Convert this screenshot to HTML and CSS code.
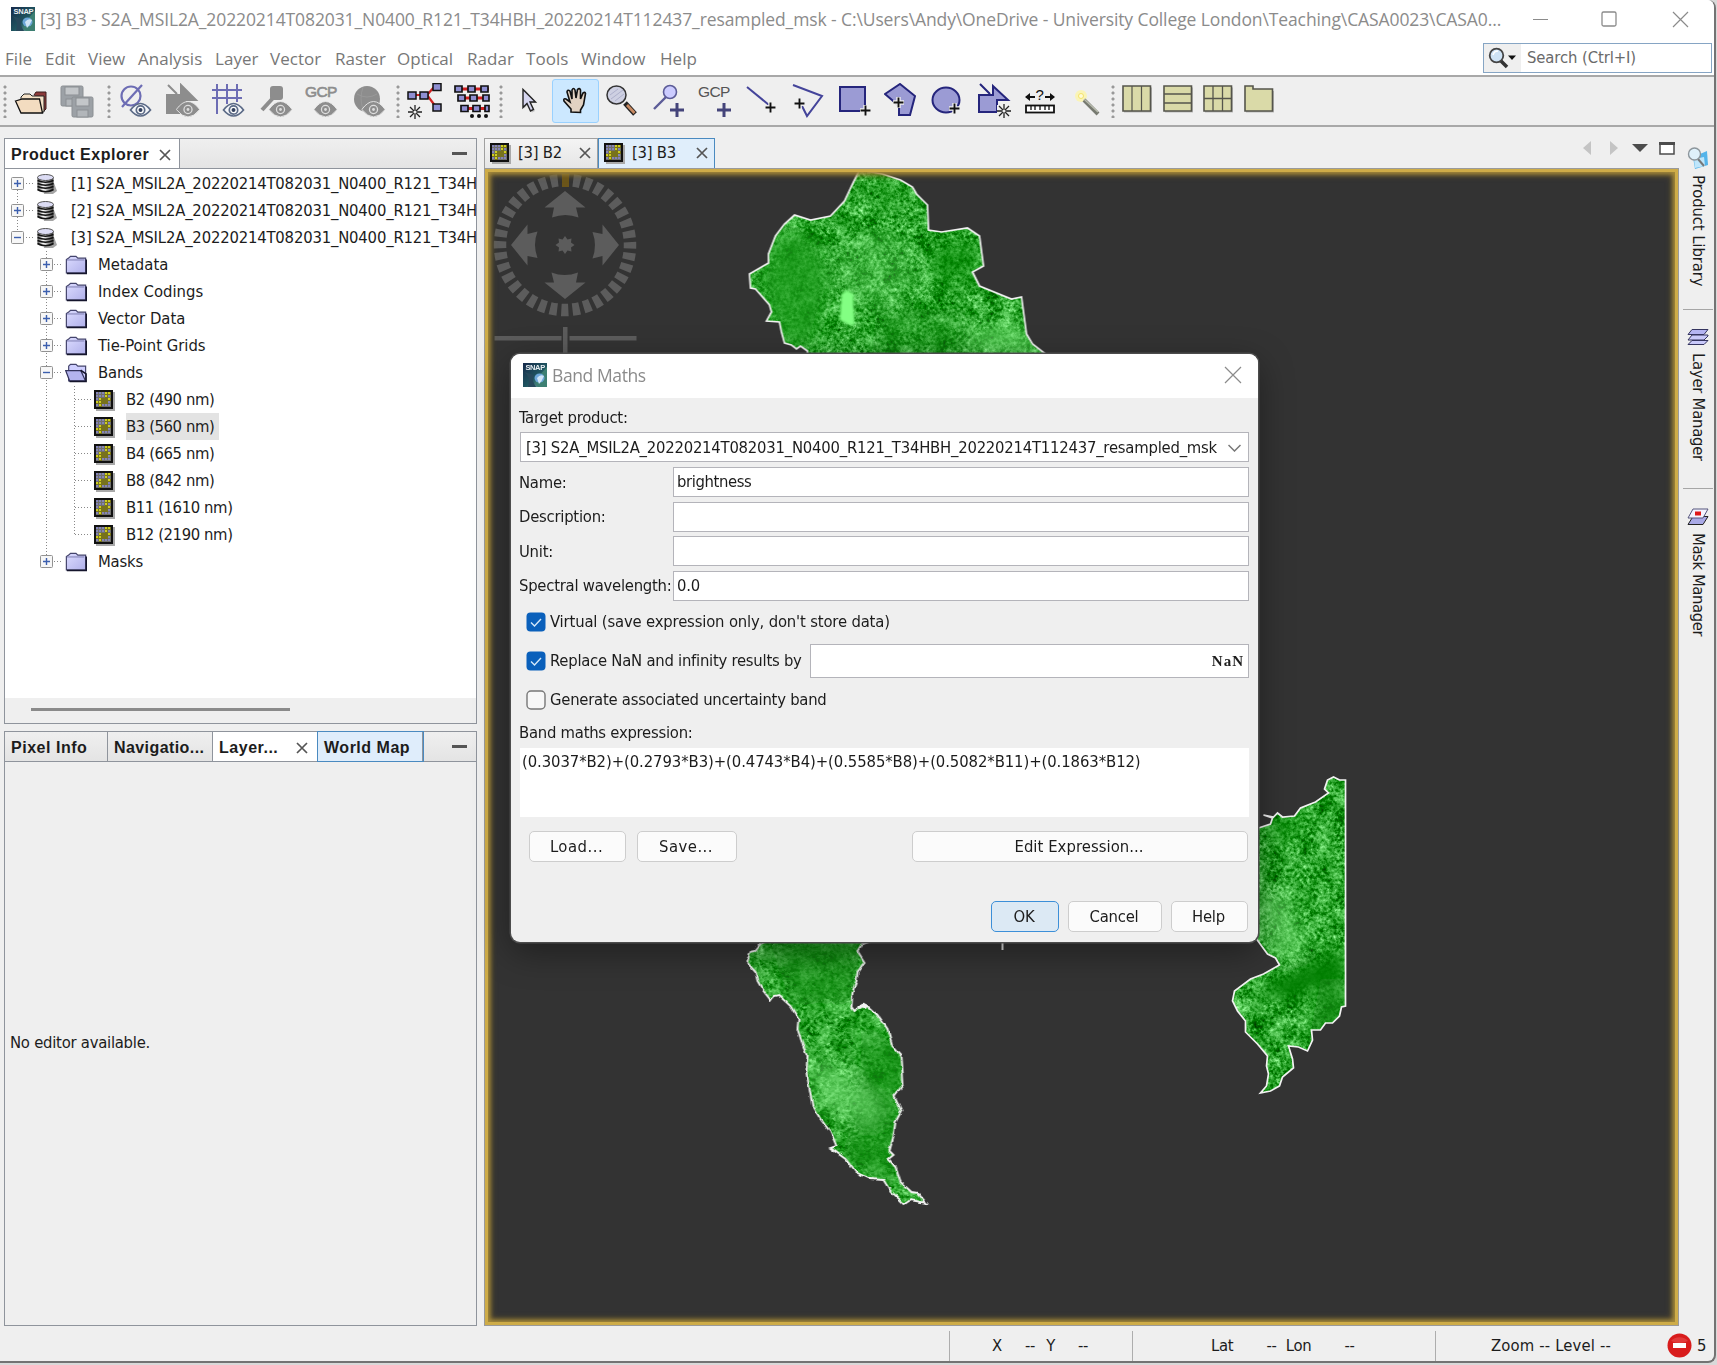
FILE: index.html
```html
<!DOCTYPE html>
<html lang="en">
<head>
<meta charset="utf-8">
<title>SNAP - Band Maths</title>
<link rel="stylesheet" href="styles.css">
</head>
<body>
<svg class="defs" width="0" height="0">
  <defs>
    <linearGradient id="g-snap" x1="0" y1="0" x2="1" y2="1"><stop offset="0" stop-color="#16294a"/><stop offset=".55" stop-color="#1f5560"/><stop offset="1" stop-color="#7fb1a8"/></linearGradient>
    <linearGradient id="g-folder" x1="0" y1="0" x2="1" y2="1"><stop offset="0" stop-color="#dcdcff"/><stop offset="1" stop-color="#b0b0ea"/></linearGradient>
    <linearGradient id="g-db" x1="0" x2="1"><stop offset="0" stop-color="#555"/><stop offset=".35" stop-color="#fff"/><stop offset="1" stop-color="#444"/></linearGradient>
    <pattern id="p-band" width="3" height="3" patternUnits="userSpaceOnUse"><rect width="3" height="3" fill="#70706c"/><rect width="2" height="2" fill="#8484b8"/></pattern>
    <pattern id="p-bandy" width="3" height="3" patternUnits="userSpaceOnUse"><rect width="3" height="3" fill="#77721c"/><rect width="2" height="2" fill="#cfcf20"/></pattern>
    <symbol id="snap" viewBox="0 0 24 24"><rect width="24" height="24" fill="url(#g-snap)"/><path d="M24 4v20h-9c-4-3-3-8 1-11z" fill="#3d7f72"/><ellipse cx="16.500" cy="15" rx="5" ry="4.500" fill="#6ca6d8"/><path d="M14 15q3-4 7-2q-2 5-5 8z" fill="#cfe4f6"/><path d="M1 9q7 4 4 15h8q-5-7-2-12z" fill="#27495c"/><text x="2.500" y="6.500" font-family="Liberation Sans" font-weight="700" font-size="7.500" fill="#e8eef2">SNAP</text></symbol>
    <symbol id="band" viewBox="0 0 22 22"><path d="M3 3h19v19H3z" fill="#a9a9a9"/><rect x="1" y="1" width="19" height="19" fill="#111"/><rect x="3" y="3" width="15" height="15" fill="url(#p-band)"/><path d="M12 3h6v3h-3v3h-3zM6 9h3v3H6zM3 12h6v3H3zM15 9h3v3h-3zM6 15h3v3H6z" fill="url(#p-bandy)"/><path d="M9 9h6v6H9z" fill="#77721c"/></symbol>
    <symbol id="folder" viewBox="0 0 24 22"><path d="M4 3.500l2-2h6l2 2h8.500v16H1.500V5z" fill="url(#g-folder)" stroke="#44446c" stroke-width="1.300"/><path d="M2 20.300h21.300V5" fill="none" stroke="#15152c" stroke-width="1.700"/><path d="M2 5.500h19" stroke="#7777ac"/></symbol>
    <symbol id="folder-open" viewBox="0 0 24 22"><path d="M4 3.500l2-2h6l2 2h8.500v16H4z" fill="#cfcfff" stroke="#44446c" stroke-width="1.300"/><path d="M.800 8.500h16.500l5 11H5z" fill="#b3b3ee" stroke="#33335c" stroke-width="1.300"/><path d="M5 20.300h18V12l-6-4" fill="none" stroke="#15152c" stroke-width="1.700"/></symbol>
    <symbol id="db" viewBox="0 0 22 22"><path d="M5 7l13 3 3 8-4 3H8z" fill="#a5a5a5"/><path d="M1.500 4.500v12c0 4 16 4 16 0v-12z" fill="url(#g-db)"/><path d="M1.500 7.500q8 3.500 16 0M1.500 10.500q8 3.500 16 0M1.500 13.500q8 3.500 16 0M1.500 16.500q8 4.500 16 0" fill="none" stroke="#111" stroke-width="1.500"/><ellipse cx="9.500" cy="4.500" rx="8" ry="3" fill="#dcdcf4" stroke="#444" stroke-width=".900"/></symbol>
    <symbol id="plus" viewBox="0 0 13 13"><rect x=".500" y=".500" width="12" height="12" rx="1" fill="#f7f7f7" stroke="#929292"/><path d="M3 6.500h7M6.500 3v7" stroke="#3c5fae" stroke-width="1.400"/></symbol>
    <symbol id="minus" viewBox="0 0 13 13"><rect x=".500" y=".500" width="12" height="12" rx="1" fill="#f7f7f7" stroke="#929292"/><path d="M3 6.500h7" stroke="#3c5fae" stroke-width="1.400"/></symbol>
    <symbol id="close" viewBox="0 0 12 12"><path d="M1 1l10 10M11 1L1 11" stroke="#555" stroke-width="1.700"/></symbol>
    <symbol id="eye" viewBox="0 0 22 16"><path d="M1 8q10-13 20 0q-10 12-20 0z" fill="#f4f6fa" stroke="#5b6a86" stroke-width="1.700"/><circle cx="11" cy="8" r="4.200" fill="#fff" stroke="#5b6a86" stroke-width="1.700"/><circle cx="11" cy="8" r="2" fill="#33415f"/></symbol>
    <symbol id="eye-off" viewBox="0 0 22 16"><path d="M0 8q11-15 22 0q-11 14-22 0z" fill="#8d8d8d" stroke="#efefef" stroke-width=".800"/><circle cx="11" cy="8" r="3.800" fill="#8d8d8d" stroke="#dedede" stroke-width="1.200"/><circle cx="11" cy="8" r="1.300" fill="#ddd"/></symbol>
    <symbol id="add" viewBox="0 0 10 10"><path d="M0 5h10M5 0v10" stroke="#efefef" stroke-width="4"/><path d="M.500 5h9M5 .500v9" stroke="#111" stroke-width="1.700"/></symbol>
    <symbol id="spark" viewBox="0 0 14 14"><path d="M0 7h14M7 0v14M2 2l10 10M12 2L2 12" stroke="#222" stroke-width="1.300"/><circle cx="7" cy="7" r="1.600" fill="#efefef"/></symbol>
    <symbol id="check" viewBox="0 0 20 20"><rect x=".500" y=".500" width="19" height="19" rx="4" fill="#0a60bb"/><path d="M5 10.500l3.500 3.500L15 7" fill="none" stroke="#d4e8fa" stroke-width="1.400"/></symbol>
    <symbol id="uncheck" viewBox="0 0 20 20"><rect x="1" y="1" width="18" height="18" rx="4" fill="#f7f7f7" stroke="#777" stroke-width="1.400"/></symbol>
  </defs>
</svg>

<div class="app">
  <header class="titlebar">
    <svg class="i24"><use href="#snap"/></svg>
    <div class="title">[3] B3 - S2A_MSIL2A_20220214T082031_N0400_R121_T34HBH_20220214T112437_resampled_msk - C:\Users\Andy\OneDrive - University College London\Teaching\CASA0023\CASA0...</div>
    <svg class="winctl" width="156" height="18" viewBox="0 0 156 18"><path d="M0 9.500h15M140 2l15 15M155 2l-15 15" stroke="#8b8b8b" fill="none" stroke-width="1.200"/><rect x="69" y="2" width="14" height="14" rx="1.500" fill="none" stroke="#8b8b8b" stroke-width="1.300"/></svg>
  </header>

  <nav class="menubar">
    <span class="m-file">File</span><span class="m-edit">Edit</span><span class="m-view">View</span><span class="m-analysis">Analysis</span><span class="m-layer">Layer</span><span class="m-vector">Vector</span><span class="m-raster">Raster</span><span class="m-optical">Optical</span><span class="m-radar">Radar</span><span class="m-tools">Tools</span><span class="m-window">Window</span><span class="m-help">Help</span>
    <div class="search">
      <div class="search-icon"><svg width="30" height="22" viewBox="0 0 30 22"><path d="M12 13l7 7" stroke="#333" stroke-width="3.600"/><circle cx="8.500" cy="8.500" r="6.800" fill="#cfe3f5" stroke="#444" stroke-width="1.800"/><path d="M5 8q1-4 5-4" stroke="#fff" stroke-width="1.600" fill="none"/><path d="M20 8.500h8l-4 4.500z" fill="#111"/></svg></div>
      <span>Search (Ctrl+I)</span>
    </div>
  </nav>

  <div class="toolbar">
    <i class="grip grip-1"></i>
    <div class="tools">
      <div class="tool"><svg viewBox="0 0 36 36"><path d="M21 12l2-3h10v17l-3 3" fill="#8c3a3a" stroke="#3a1f1f"/><path d="M8 29V14l3-3h6l2 2h12v16z" fill="#f5e2c8" stroke="#222"/><path d="M2.500 18l7-2h17l3 14H8z" fill="#f3dcc0" stroke="#111" stroke-width="1.300"/></svg></div>
      <div class="tool"><svg viewBox="0 0 36 36"><g stroke="#8b8f93"><rect x="1" y="3" width="22" height="20" rx="1.500" fill="#9ca1a6"/><rect x="5" y="4" width="14" height="8" fill="#c3c6c9"/><rect x="6" y="16" width="12" height="7" fill="#b2b6ba"/><rect x="12" y="14" width="21" height="20" rx="1.500" fill="#9ca1a6"/><rect x="16" y="15" width="13" height="8" fill="#c3c6c9"/><rect x="17" y="27" width="11" height="7" fill="#b2b6ba"/></g></svg></div>
    </div>
    <i class="grip grip-2"></i>
    <div class="tools">
      <div class="tool"><svg viewBox="0 0 36 36"><circle cx="13" cy="13" r="9.500" fill="none" stroke="#6d6db4" stroke-width="2.200"/><path d="M4 24L24 2" stroke="#6d6db4" stroke-width="2.200"/><use href="#eye" x="11" y="19" width="23" height="16"/></svg></div>
      <div class="tool"><svg viewBox="0 0 36 36"><path d="M2 12h14V2l15 15H20v13H2zM3 2l9 9" fill="#8d8d8d" stroke="#8d8d8d" stroke-width="2"/><use href="#eye-off" x="11" y="18" width="24" height="17"/></svg></div>
      <div class="tool"><svg viewBox="0 0 36 36"><path d="M1 7h30M1 15h30M6 1v30M16 1v20M26 1v18" stroke="#6d6db4" stroke-width="2"/><use href="#eye" x="11" y="19" width="23" height="16"/></svg></div>
      <div class="tool"><svg viewBox="0 0 36 36"><path d="M4 27L15 15" stroke="#8d8d8d" stroke-width="4"/><rect x="12" y="3" width="13" height="14" rx="3" fill="#8d8d8d"/><use href="#eye-off" x="10" y="18" width="25" height="17"/></svg></div>
      <div class="tool"><svg viewBox="0 0 36 36"><text x="1" y="14" class="gcp" fill="#8d8d8d" stroke="#8d8d8d" stroke-width=".6">GCP</text><use href="#eye-off" x="9" y="18" width="25" height="17"/></svg></div>
      <div class="tool"><svg viewBox="0 0 36 36"><circle cx="16" cy="16" r="13" fill="#8d8d8d"/><path d="M6 11q10 6 20 0M12 4q-4 12 0 22" stroke="#999" fill="none"/><use href="#eye-off" x="10" y="18" width="25" height="17"/></svg></div>
    </div>
    <i class="grip grip-3"></i>
    <div class="tools">
      <div class="tool"><svg viewBox="0 0 36 36"><path d="M6 12h14M20 12l8-9M20 12l9 12" stroke="#d02020" stroke-width="2.200"/><g fill="#8f8fd2" stroke="#111" stroke-width="1.500"><rect x="1" y="9" width="8" height="7"/><rect x="13" y="9" width="8" height="7"/><rect x="26" y="0.500" width="8" height="7"/><rect x="26" y="21" width="8" height="7"/></g><use href="#spark" x="1" y="22" width="14" height="14"/></svg></div>
      <div class="tool"><svg viewBox="0 0 36 36"><path d="M4 6h31M7 15h28M10 25.500h25" stroke="#d02020" stroke-width="2.800"/><g fill="#8f8fd2" stroke="#111" stroke-width="1.700"><path d="M1 3h7v6H1zM14 3h7v6h-7zM27 3h7v6h-7zM4 12h7v6H4zM16 12h7v6h-7zM29 12h6v6h-6zM7 22.500h7v6H7zM19 22.500h7v6h-7zM31 22.500h4v6h-4z"/></g><g fill="#111"><circle cx="18" cy="33" r="2"/><circle cx="25" cy="33" r="2"/><circle cx="32" cy="33" r="2"/></g></svg></div>
    </div>
    <i class="grip grip-4"></i>
    <div class="tools">
      <div class="tool"><svg viewBox="0 0 36 36"><path d="M14 7l12 13h-6l4 8-3 1.500-4-8-4 4z" fill="#aaa" opacity=".6"/><path d="M12 6.500v18l4-4 3.500 7.500 3-1.500-3.500-7.500h5.500z" fill="#d6d6f0" stroke="#222" stroke-width="1.400"/></svg></div>
      <div class="tool active"><svg viewBox="0 0 36 36"><path d="M13 29v-3l-7-8q-1-3 2-2l4 3-3-10q.5-3 3-1l2 8V7q1.500-3 3 0l1 8 1.500-8.500q2-2 3 .5v9l2.500-6q2-1.500 2.500.5l-2 11.500-3 5v2.500z" fill="#e2d2c2" stroke="#111" stroke-width="1.600"/></svg></div>
      <div class="tool"><svg viewBox="0 0 36 36"><path d="M21 20l10 11" stroke="#222" stroke-width="5"/><path d="M23 22l7.500 8" stroke="#c88a62" stroke-width="2.800"/><ellipse cx="12.500" cy="12" rx="9.500" ry="9" fill="#ced0e2" stroke="#333" stroke-width="1.500"/><path d="M6 12l8-6M7 16L19 7M11 18l9-7" stroke="#aeb1cc"/></svg></div>
      <div class="tool"><svg viewBox="0 0 36 36"><path d="M3 26L16 13" stroke="#5c5c98" stroke-width="2.400"/><circle cx="19" cy="9" r="6.500" fill="#ccccff" stroke="#5c5c98" stroke-width="1.600"/><path d="M19 27h14M26 20v14" stroke="#44447a" stroke-width="3"/></svg></div>
      <div class="tool"><svg viewBox="0 0 36 36"><text x="1" y="14" class="gcp" fill="#555">GCP</text><path d="M20 27h14M27 20v14" stroke="#44447a" stroke-width="3"/></svg></div>
      <div class="tool"><svg viewBox="0 0 36 36"><path d="M3 4l22 18" stroke="#44449a" stroke-width="2"/><use href="#add" x="21" y="19" width="11" height="11"/></svg></div>
      <div class="tool"><svg viewBox="0 0 36 36"><path d="M3 2l29 11-15 20-5-10" fill="none" stroke="#44449a" stroke-width="2"/><use href="#add" x="4" y="15" width="11" height="11"/></svg></div>
      <div class="tool"><svg viewBox="0 0 36 36"><rect x="3" y="4" width="25" height="24" fill="#9b9bd4" stroke="#25257c" stroke-width="2"/><use href="#add" x="23" y="22" width="11" height="11"/></svg></div>
      <div class="tool"><svg viewBox="0 0 36 36"><path d="M1 11L16 1l15 12-5 19H15V23z" fill="#9b9bd4" stroke="#25257c" stroke-width="2"/><use href="#add" x="9" y="14" width="11" height="11"/></svg></div>
      <div class="tool"><svg viewBox="0 0 36 36"><ellipse cx="16" cy="17" rx="13.500" ry="12.500" fill="#9b9bd4" stroke="#25257c" stroke-width="2"/><use href="#add" x="19" y="20" width="11" height="11"/></svg></div>
      <div class="tool"><svg viewBox="0 0 36 36"><path d="M2 12h14V3l15 14H20v12H2zM3 1l10 10" fill="#9b9bd4" stroke="#25257c" stroke-width="2"/><path d="M20 22h14v13H20z" fill="#efefef"/><use href="#spark" x="20" y="21" width="14" height="14"/></svg></div>
      <div class="tool"><svg viewBox="0 0 36 36"><path d="M3 14h9M22 14h9" stroke="#111" stroke-width="2"/><path d="M2 14l5-4v8zM32 14l-5-4v8z" fill="#111"/><text x="12.500" y="17" font-family="Liberation Sans" font-size="15" fill="#111">?</text><rect x="3" y="22.500" width="28" height="7" fill="#fff" stroke="#111" stroke-width="1.800"/><path d="M8 23v4M12 23v4M17 23v4M22 23v4M26 23v4" stroke="#111" stroke-width="1.300"/></svg></div>
      <div class="tool"><svg viewBox="0 0 36 36"><circle cx="11" cy="13" r="6" fill="#fff6a0" opacity=".7"/><path d="M14 17l14 14" stroke="#777a70" stroke-width="4"/><path d="M14 16l14 13" stroke="#b9bcae" stroke-width="1.400"/><circle cx="11" cy="13" r="2.500" fill="#fffbd8" stroke="#f4e36a"/></svg></div>
    </div>
    <i class="grip grip-5"></i>
    <div class="tools tiles">
      <div class="tool"><svg viewBox="0 0 36 36"><path d="M5 4.500h28v25H5z" fill="#bbb"/><path d="M4 3h27.500v25H4z" fill="#dadaa8" stroke="#55554c" stroke-width="1.600"/><path d="M13 3v25M22.500 3v25" stroke="#55554c" stroke-width="1.200"/></svg></div>
      <div class="tool"><svg viewBox="0 0 36 36"><path d="M5 4.500h28v25H5z" fill="#bbb"/><path d="M4 3h27.500v25H4z" fill="#dadaa8" stroke="#55554c" stroke-width="1.600"/><path d="M4 11h27.500M4 20h27.500" stroke="#55554c" stroke-width="1.600"/></svg></div>
      <div class="tool"><svg viewBox="0 0 36 36"><path d="M5 4.500h28v25H5z" fill="#bbb"/><path d="M4 3h27.500v25H4z" fill="#dadaa8" stroke="#55554c" stroke-width="1.600"/><path d="M4 15.500h27.500M13 3v25M22.500 3v25" stroke="#55554c" stroke-width="1.300"/></svg></div>
      <div class="tool"><svg viewBox="0 0 36 36"><path d="M5 8h28v21.500H5z" fill="#bbb"/><path d="M4 3h8v3h19.500v22H4z" fill="#dadaa8" stroke="#55554c" stroke-width="1.600"/></svg></div>
    </div>
  </div>

  <main class="workspace">
    <div class="left">
      <section class="panel explorer">
        <div class="tabs">
          <div class="tab selected t-explorer"><b>Product Explorer</b><svg class="x"><use href="#close"/></svg></div>
          <div class="fill"><i class="minim"></i></div>
        </div>
        <div class="tree">
          <div class="roots">
            <div class="row root"><svg class="exp"><use href="#plus"/></svg><i class="dash"></i><svg class="ico"><use href="#db"/></svg><span class="lbl">[1] S2A_MSIL2A_20220214T082031_N0400_R121_T34H</span></div>
            <div class="row root"><svg class="exp"><use href="#plus"/></svg><i class="dash"></i><svg class="ico"><use href="#db"/></svg><span class="lbl">[2] S2A_MSIL2A_20220214T082031_N0400_R121_T34H</span></div>
            <div class="row root"><svg class="exp"><use href="#minus"/></svg><i class="dash"></i><svg class="ico"><use href="#db"/></svg><span class="lbl">[3] S2A_MSIL2A_20220214T082031_N0400_R121_T34H</span></div>
          </div>
          <div class="children">
            <div class="row"><svg class="exp"><use href="#plus"/></svg><i class="dash"></i><svg class="ico"><use href="#folder"/></svg><span class="lbl">Metadata</span></div>
            <div class="row"><svg class="exp"><use href="#plus"/></svg><i class="dash"></i><svg class="ico"><use href="#folder"/></svg><span class="lbl">Index Codings</span></div>
            <div class="row"><svg class="exp"><use href="#plus"/></svg><i class="dash"></i><svg class="ico"><use href="#folder"/></svg><span class="lbl">Vector Data</span></div>
            <div class="row"><svg class="exp"><use href="#plus"/></svg><i class="dash"></i><svg class="ico"><use href="#folder"/></svg><span class="lbl">Tie-Point Grids</span></div>
            <div class="row"><svg class="exp"><use href="#minus"/></svg><i class="dash"></i><svg class="ico"><use href="#folder-open"/></svg><span class="lbl tight">Bands</span></div>
            <div class="bands">
              <div class="row"><i class="dash"></i><svg class="ico"><use href="#band"/></svg><span class="lbl">B2 (490 nm)</span></div>
              <div class="row"><i class="dash"></i><svg class="ico"><use href="#band"/></svg><span class="lbl current">B3 (560 nm)</span></div>
              <div class="row"><i class="dash"></i><svg class="ico"><use href="#band"/></svg><span class="lbl">B4 (665 nm)</span></div>
              <div class="row"><i class="dash"></i><svg class="ico"><use href="#band"/></svg><span class="lbl">B8 (842 nm)</span></div>
              <div class="row"><i class="dash"></i><svg class="ico"><use href="#band"/></svg><span class="lbl">B11 (1610 nm)</span></div>
              <div class="row"><i class="dash"></i><svg class="ico"><use href="#band"/></svg><span class="lbl">B12 (2190 nm)</span></div>
            </div>
            <div class="row"><svg class="exp"><use href="#plus"/></svg><i class="dash"></i><svg class="ico"><use href="#folder"/></svg><span class="lbl tight">Masks</span></div>
          </div>
        </div>
        <div class="scroll"><i></i></div>
      </section>
      <section class="panel editorless">
        <div class="tabs">
          <div class="tab t-pixel"><b>Pixel Info</b></div>
          <div class="tab t-nav"><b>Navigatio...</b></div>
          <div class="tab selected t-layer"><b>Layer...</b><svg class="x"><use href="#close"/></svg></div>
          <div class="tab hover t-world"><b>World Map</b></div>
          <div class="fill"><i class="minim"></i></div>
        </div>
        <div class="empty">No editor available.</div>
      </section>
    </div>

    <section class="editor">
      <div class="doc-tabs">
        <div class="doc"><svg class="ico"><use href="#band"/></svg><span>[3] B2</span><svg class="x"><use href="#close"/></svg></div>
        <div class="doc on"><svg class="ico"><use href="#band"/></svg><span>[3] B3</span><svg class="x"><use href="#close"/></svg></div>
        <svg class="doc-ctl" width="94" height="18" viewBox="0 0 94 18"><path d="M9 2v14L1 9zM28 2v14l8-7z" fill="#c4c4c4"/><path d="M50 5h16l-8 8z" fill="#4c4c4c"/><rect x="78" y="4" width="14" height="11" fill="#fff" stroke="#4c4c4c" stroke-width="1.500"/><path d="M77 4.500h16" stroke="#4c4c4c" stroke-width="3"/></svg>
      </div>
      <div class="view">
        <svg class="map" viewBox="484.500 170 1193 1156">
          <defs>
            <filter id="terrain" x="0" y="0" width="1" height="1" color-interpolation-filters="sRGB">
              <feTurbulence type="fractalNoise" baseFrequency=".3" numOctaves="3" seed="7" result="fine"/>
              <feTurbulence type="fractalNoise" baseFrequency=".06" numOctaves="4" seed="21" result="coarse"/>
              <feComposite in="fine" in2="coarse" operator="arithmetic" k1="0" k2=".55" k3=".45" k4="0" result="mix"/>
              <feColorMatrix in="mix" values="1.500 0 0 0 -.570  1.250 0 0 0 .020  1.500 0 0 0 -.570  0 0 0 0 1"/>
            </filter>
            <filter id="coast" x="-.1" y="-.1" width="1.200" height="1.200"><feTurbulence type="fractalNoise" baseFrequency=".12" numOctaves="2" seed="3"/><feDisplacementMap in="SourceGraphic" scale="4" xChannelSelector="R" yChannelSelector="G"/></filter>
            <filter id="soft" x="-.5" y="-.5" width="2" height="2"><feGaussianBlur stdDeviation="8"/></filter>
            <filter id="soft2" x="-.5" y="-.5" width="2" height="2"><feGaussianBlur stdDeviation="1.200"/></filter>
            <path id="north" d="M859 171L882 175 900 181 912 188 916 195 927 206 928 231 941 233 967 229 979 237 983 267 972 273 979 287 1011 300 1021 298 1026 335 1032 345 1045 355V362H807L807 352 800 347 796 350 791 346 784 344 781 333 779 323 766 322 771 313 769 306 755 290 750 289 749 275 768 264 768 255 775 237 784 225 794 216 810 221 830 217 844 202 852 185z"/>
            <path id="south" d="M762 935L763 942 755 952 750 953 746 963 755 973 757 982 763 992 770 1001 773 997 778 996 790 1007 798 1020 797 1030 802 1045 807 1057 806 1073 809 1090 812 1107 820 1120 830 1133 836 1147 830 1149 845 1160 855 1173 870 1180 883 1181 890 1192 904 1205 910 1201 926 1204 917 1194 911 1193 900 1183 895 1168 888 1160 893 1156 889 1152 893 1137 895 1123 901 1112 894 1097 903 1085 901 1057 892 1047 887 1030 878 1017 867 1007 862 1005 854 1012 851 1008 852 993 856 982 857 973 864 963 857 952 862 944 872 941V935z"/>
            <path id="east" d="M1250 829H1258L1270 825 1272 819 1263 816 1273 818 1277 814 1282 818 1294 817 1300 809 1315 803 1328 794 1324 790 1327 781 1333 778 1339 781H1345V1007L1341 1008 1339 1017 1332 1024 1325 1024 1320 1031 1311 1031 1312 1041 1307 1052 1298 1048 1288 1047 1292 1060 1293 1069 1282 1078 1279 1087 1270 1092 1260 1094 1266 1087 1268 1075 1266 1067 1267 1057 1257 1045 1245 1033 1245 1022 1237 1012 1232 1002 1234 992 1250 980 1263 975 1279 966 1275 959 1267 955 1256 940z"/>
            <clipPath id="c-north"><use href="#north"/></clipPath>
            <clipPath id="c-south"><use href="#south"/></clipPath>
            <clipPath id="c-east"><use href="#east"/></clipPath>
          </defs>
          <g>
            <g clip-path="url(#c-north)">
              <rect x="740" y="165" width="320" height="200" filter="url(#terrain)"/>
              <g filter="url(#soft)"><path d="M765 240l30-10 30 20 5 40-20 60-30-5-20-60z" fill="#1a9a1a" opacity=".7"/><ellipse cx="955" cy="265" rx="24" ry="25" fill="#0b850b" opacity=".55"/><ellipse cx="884" cy="195" rx="8" ry="14" fill="#0b850b" opacity=".5"/><ellipse cx="875" cy="270" rx="38" ry="35" fill="#6fdc6f" opacity=".3"/><path d="M875 310l90 0 0 50-95 0z" fill="#128f12" opacity=".4"/><path d="M970 350l0-20 50-5 20 35z" fill="#6fe06f" opacity=".6"/></g>
              <path d="M841 295l5-4 7 4 1 30-2 2-7-3-6-3 1-14z" fill="#83ff83" filter="url(#soft2)"/>
            </g>
            <use href="#north" fill="none" stroke="#f2f2f2" stroke-width="1.700"/>
          </g>
          <g filter="url(#coast)">
            <g clip-path="url(#c-south)">
              <rect x="740" y="930" width="190" height="280" filter="url(#terrain)"/>
              <g filter="url(#soft)"><path d="M765 930h100l-15 75-60 0z" fill="#118a11" opacity=".6"/><path d="M860 1020l50 40-20 140-50-50 20-30z" fill="#128f12" opacity=".6"/><path d="M808 1060l25 5 50 45-10 14-50-15z" fill="#8cf08c" opacity=".5"/></g>
            </g>
            <use href="#south" fill="none" stroke="#f2f2f2" stroke-width="1.900"/>
            <path d="M858 1009l4-3 4 3" fill="none" stroke="#f2f2f2" stroke-width="4"/>
          </g>
          <g clip-path="url(#c-east)">
            <rect x="1225" y="770" width="125" height="330" filter="url(#terrain)"/>
            <g filter="url(#soft)"><path d="M1255 990l90-40v24l-60 28z" fill="#047d04"/><path d="M1320 980h30v70l-45 5z" fill="#0b870b" opacity=".7"/><path d="M1255 900l30-10 20 60-30 10z" fill="#84ea84" opacity=".5"/><path d="M1255 830l60-20-30 40z" fill="#0b870b" opacity=".5"/></g>
          </g>
          <use href="#east" fill="none" stroke="#f2f2f2" stroke-width="1.700"/>
          <path d="M999 943h6M1002 942v9" stroke="#ddd" stroke-width="2"/>
          <g fill="#5c5c5c">
            <circle cx="564.500" cy="246" r="65" fill="none" stroke="#5c5c5c" stroke-width="12.500" stroke-dasharray="7.200 4.145" stroke-dashoffset="3.600"/>
            <path d="M561.500 175h7v13h-7z" fill="#6b551a"/>
            <path id="arrow" d="M564.500 192l20.500 16.500h-9.500l2.500 10q-13-5-26.500 0l2-10H544z"/>
            <use href="#arrow" transform="rotate(90 564.500 246)"/><use href="#arrow" transform="rotate(180 564.500 246)"/><use href="#arrow" transform="rotate(270 564.500 246)"/>
            <path d="M564.500 237l2.500 3.500 4-1-.5 4 3.500 2.500-3.500 2.500.5 4-4-1-2.500 3.500-2.500-3.500-4 1 .5-4-3.500-2.500 3.500-2.500-.5-4 4 1z"/>
            <path d="M494 337h67v4.500h-67zM569 337h67v4.500h-67zM562.500 328h4.500v26h-4.500z"/>
          </g>
        </svg>
        <div class="glow"></div>
      </div>
    </section>

    <aside class="side">
      <div class="dock d1"><svg width="22" height="22" viewBox="0 0 22 22"><path d="M6 10l14-6 1 14-13 4z" fill="#54b4ea"/><path d="M7 12l10-2 1 9-10 2z" fill="#bfe6fb"/><path d="M11 12l6 7" stroke="#777" stroke-width="2"/><circle cx="7.500" cy="7" r="6" fill="#dff1fb" stroke="#8d969c" stroke-width="1.400"/></svg><span>Product Library</span></div>
      <div class="dock d2"><svg width="22" height="18" viewBox="0 0 22 18"><g stroke="#34345f" fill="#c9c9fa"><path d="M1 16.500l4-4h16l-4 4z"/><path d="M1 12l4-5h16v1l-4 4z"/><path d="M1 6.500l4-5h16l-4 5z" fill="#b4b4f2"/></g></svg><span>Layer Manager</span></div>
      <div class="dock d3"><svg width="22" height="18" viewBox="0 0 22 18"><path d="M1 16.500l5-8h15l-5 8z" fill="#a9a9e6" stroke="#222"/><path d="M1 10l5-9h15l-5 9z" fill="#f4f4ff" stroke="#55557c"/><rect x="8" y="3.500" width="6" height="4" fill="#e01818"/></svg><span>Mask Manager</span></div>
    </aside>
  </main>

  <footer class="status">
    <div class="cell s-xy"><span>X</span><span class="v1">--</span><span class="v2">Y</span><span class="v3">--</span></div>
    <div class="cell s-ll"><span>Lat</span><span class="v1">--</span><span class="v2">Lon</span><span class="v3">--</span></div>
    <div class="cell s-zoom"><span>Zoom -- Level --</span></div>
    <svg width="25" height="25" viewBox="0 0 25 25"><circle cx="12.500" cy="12.500" r="12" fill="#d81c1c"/><path d="M4 8a10 8 0 0 1 17 0q-8 4-17 0z" fill="#ef6a6a" opacity=".4"/><rect x="6" y="10" width="13" height="5" fill="#fff"/></svg>
    <span class="count">5</span>
  </footer>

  <div class="dialog">
    <div class="dlg-title"><svg class="i24"><use href="#snap"/></svg><span>Band Maths</span><svg width="18" height="18" viewBox="0 0 18 18"><path d="M1 1l16 16M17 1L1 17" stroke="#8b8b8b" stroke-width="1.200"/></svg></div>
    <div class="dlg-body">
      <div class="label">Target product:</div>
      <div class="combo"><span>[3] S2A_MSIL2A_20220214T082031_N0400_R121_T34HBH_20220214T112437_resampled_msk</span><svg width="13" height="8" viewBox="0 0 13 8"><path d="M.500 1l6 6 6-6" fill="none" stroke="#777" stroke-width="1.500"/></svg></div>
      <div class="form">
        <label>Name:</label><div class="field brightness">brightness</div>
        <label>Description:</label><div class="field"></div>
        <label>Unit:</label><div class="field"></div>
        <label>Spectral wavelength:</label><div class="field">0.0</div>
      </div>
      <div class="check c1"><svg><use href="#check"/></svg><span>Virtual (save expression only, don't store data)</span></div>
      <div class="check c2"><svg><use href="#check"/></svg><span>Replace NaN and infinity results by</span><div class="field nan">NaN</div></div>
      <div class="check c3"><svg><use href="#uncheck"/></svg><span>Generate associated uncertainty band</span></div>
      <div class="label expr-label">Band maths expression:</div>
      <div class="expr">(0.3037*B2)+(0.2793*B3)+(0.4743*B4)+(0.5585*B8)+(0.5082*B11)+(0.1863*B12)</div>
      <div class="buttons"><div class="btn b-load">Load...</div><div class="btn b-save">Save...</div><div class="btn b-edit">Edit Expression...</div></div>
      <div class="actions"><div class="btn b-ok">OK</div><div class="btn b-cancel">Cancel</div><div class="btn b-help">Help</div></div>
    </div>
  </div>
</div>
</body>
</html>
```
FILE: styles.css
```css
* { box-sizing: border-box; }
body { margin: 0; width: 1717px; height: 1365px; overflow: hidden; background: #d9d9d9; color: #1c1c1c; font: 16.5px/20px "DejaVu Sans Condensed", "DejaVu Sans", sans-serif; font-stretch: condensed; letter-spacing: -.25px; white-space: nowrap; }
svg { display: block; flex: none; }
.defs { position: absolute; }
.i24 { width: 24px; height: 24px; }
.app { position: relative; width: 1716px; height: 1363px; display: flex; flex-direction: column; background: #efefef; border-right: 2px solid #737373; border-bottom: 2px solid #737373; border-radius: 0 8px 8px 0; overflow: hidden; }

.titlebar { height: 38px; flex: none; display: flex; align-items: center; padding-left: 11px; background: #fff; }
.title { margin-left: 5px; width: 1493px; font: 17.5px/24px "Open Sans", sans-serif; letter-spacing: -.105px; color: #8b8b8b; }

.menubar { height: 37px; flex: none; display: flex; align-items: center; padding: 9px 0 0 5px; background: #fff; color: #777; font: 17px/24px "Open Sans", sans-serif; letter-spacing: .05px; }
.menubar > span { height: 28px; }
.m-file { width: 40px; } .m-edit { width: 43px; } .m-view { width: 50px; } .m-analysis { width: 77px; } .m-layer { width: 55px; } .m-vector { width: 65px; } .m-raster { width: 62px; } .m-optical { width: 70px; } .m-radar { width: 59px; } .m-tools { width: 55px; } .m-window { width: 79px; } .m-help { width: 45px; }
.search { margin: -7px 2px 0 auto; width: 229px; height: 30px; display: flex; border: 1.5px solid #86a5c4; background: #fff; color: #6a6a6a; font: 16.5px/27px "DejaVu Sans Condensed", sans-serif; letter-spacing: -.1px; }
.search-icon { width: 37px; margin-right: 6px; padding: 3px 0 0 4px; background: #efefef; }

.toolbar { height: 52px; flex: none; display: flex; align-items: center; border-top: 2px solid #a8a8a8; border-bottom: 2px solid #a8a8a8; background: #efefef; }
.tools { display: flex; }
.tool { width: 46.6px; height: 44px; display: flex; align-items: center; justify-content: center; }
.tool svg { width: 36px; height: 36px; }
.tool.active { background: #cce8ff; border: 1px solid #99d1ff; border-radius: 3px; }
.tiles .tool { width: 40.5px; }
.gcp { font-family: "Liberation Sans"; font-size: 15.5px; letter-spacing: -.6px; }
.grip { height: 34px; background: radial-gradient(circle, #999 1.3px, transparent 1.8px) right 0 top 0 / 4px 6px repeat-y; }
.grip-1 { width: 8px; background-position-x: 3px; } .grip-2 { width: 11.5px; background-position-x: 6px; } .grip-3 { width: 9.4px; background-position-x: 4px; } .grip-4 { width: 10.8px; background-position-x: 4px; } .grip-5 { width: 5.5px; background-position-x: 0; }

.workspace { flex: 1; display: flex; padding: 11px 0 0 4px; min-height: 0; }
.left { width: 473px; display: flex; flex-direction: column; gap: 7px; }
.panel { border: 1px solid #8f949c; display: flex; flex-direction: column; }
.explorer { height: 586px; background: #fff; }
.editorless { height: 595px; background: #efefef; }
.tabs { height: 30px; flex: none; display: flex; border-bottom: 1px solid #8f949c; background: linear-gradient(#efefef, #e4e4e4); }
.tab { display: flex; align-items: center; padding: 2px 0 0 6px; border-right: 1px solid #8f949c; }
.tab b { font: 700 16px/20px "Liberation Sans", sans-serif; letter-spacing: .52px; }
.tab.selected { background: #fff; }
.tab.hover { background: #dfedfb; outline: 1px solid #4a8ac0; }
.x { width: 12px; height: 12px; }
.t-explorer { width: 175px; } .t-explorer .x { margin-left: auto; margin-right: 8px; }
.t-pixel { width: 103px; } .t-nav { width: 105px; } .t-layer { width: 105px; } .t-world { width: 105px; }
.t-nav b { letter-spacing: .42px; }
.t-layer .x { margin-left: auto; margin-right: 9px; }
.fill { flex: 1; display: flex; align-items: center; justify-content: flex-end; padding-right: 9px; }
.minim { width: 15px; height: 3px; background: #555; }

.tree { flex: 1; padding-top: 1px; overflow: hidden; }
.row { height: 27px; display: flex; align-items: center; }
.exp { width: 13px; height: 13px; margin-left: 35px; }
.dash { flex: none; width: 8px; height: 1px; margin: 0 3px 0 1px; background: repeating-linear-gradient(90deg, #888 0 1px, transparent 1px 3px); }
.ico { width: 22px; height: 22px; margin-right: 11px; }
.root .exp { margin-left: 6px; } .root .dash { margin: 0 2px; } .root .ico { margin-right: 13px; }
.lbl { line-height: 27px; letter-spacing: 0; }
.root .lbl { letter-spacing: -.18px; }
.lbl.tight { letter-spacing: -.2px; }
.bands .lbl { letter-spacing: -.4px; }
.roots { background: repeating-linear-gradient(#888 0 1px, transparent 1px 3px) 12px 14px / 1px 54px no-repeat; }
.children { background: repeating-linear-gradient(#888 0 1px, transparent 1px 3px) 41px 0 / 1px 310px no-repeat; }
.bands { background: repeating-linear-gradient(#888 0 1px, transparent 1px 3px) 69px 0 / 1px 149px no-repeat; }
.bands .dash { width: 16px; margin: 0 2px 0 70px; }
.current { padding-right: 5px; background: #e3e3e3; }
.scroll { height: 25px; padding: 10px 0 0 26px; background: #efefef; }
.scroll i { display: block; width: 259px; height: 3px; background: #8a8a8a; }
.empty { flex: 1; display: flex; align-items: center; padding: 0 0 1px 5px; }

.editor { width: 1195px; margin-left: 7px; display: flex; flex-direction: column; }
.doc-tabs { height: 30px; flex: none; display: flex; align-items: stretch; }
.doc { width: 114px; display: flex; align-items: center; padding: 0 6px 2px 4px; border: 1px solid #a0a0a0; border-bottom: 0; background: linear-gradient(#f4f4f4, #e6e6e6); }
.doc.on { width: 117px; border-color: #4a8ac0; background: #e0eefb; }
.doc .ico { margin-right: 7px; } .doc .x { margin-left: auto; }
.doc-ctl { margin: 1px 3px 0 auto; }
.view { height: 1158px; position: relative; border: 1px solid #9a9a9a; background: #333; }
.map { width: 1193px; height: 1156px; }
.glow { position: absolute; inset: 0; border: 3px solid #ceac48; box-shadow: inset 0 0 4px 2px #a98d3c, inset 0 0 6px 3px rgba(120, 100, 44, .8); }

.side { width: 30px; margin-left: 4px; padding-top: 9px; display: flex; flex-direction: column; }
.dock { display: flex; flex-direction: column; align-items: center; border-bottom: 1px solid #a6a6a6; }
.dock span { writing-mode: vertical-rl; line-height: 20px; margin-top: 6px; letter-spacing: -.1px; }
.d1 { height: 163px; } .d2 { height: 179px; padding-top: 18px; } .d3 { border: 0; padding-top: 19px; } .d2 span, .d3 span { margin-top: 7px; letter-spacing: -.25px; } .d3 span { letter-spacing: -.4px; }

.status { height: 34px; flex: none; display: flex; align-items: center; padding: 3px 0 0 949px; }
.cell { height: 30px; display: flex; align-items: center; border-left: 1.5px solid #adadad; }
.s-xy { width: 183px; padding-left: 42px; } .s-xy .v1 { margin-left: 23px; } .s-xy .v2 { margin-left: 11px; } .s-xy .v3 { margin-left: 23px; }
.s-ll { width: 303px; padding-left: 78px; } .s-ll .v1 { margin-left: 33px; } .s-ll .v2 { margin-left: 9px; } .s-ll .v3 { margin-left: 33px; }
.s-zoom { width: 232px; padding-left: 55px; letter-spacing: .15px; }
.count { margin-left: 5px; }

/* modal window floating above the workspace */
.dialog { position: absolute; left: 511px; top: 354px; width: 747px; height: 588px; border-radius: 9px; background: #efefef; overflow: hidden; box-shadow: 0 0 0 1.500px #4c4c4c, 0 10px 35px rgba(0, 0, 0, .4); }
.dlg-title { height: 44px; display: flex; align-items: center; padding: 0 16px 3px 12px; background: #fff; color: #8b8b8b; font: 17.5px/24px "Open Sans", sans-serif; letter-spacing: -.4px; }
.dlg-title span { margin-left: 5px; flex: 1; padding-top: 1px; }
.dlg-body { padding: 10px 9px 0 8px; }
.label { height: 24px; line-height: 20px; }
.combo { height: 30px; margin-left: 1px; padding: 1px 7px 0 5px; display: flex; align-items: center; justify-content: space-between; border: 1.5px solid #b4b4ba; background: #fff; letter-spacing: -.22px; }
.form { margin-top: 5px; display: grid; grid-template-columns: 154px 1fr; row-gap: 4.600px; align-items: center; }
.form label { padding-top: 1px; }
.field { height: 30px; padding-left: 3px; line-height: 28px; border: 1.5px solid #b4b4ba; background: #fff; }
.brightness { letter-spacing: -.4px; }
.check { display: flex; align-items: center; padding-left: 7px; }
.check svg { width: 20px; height: 20px; margin-right: 4px; }
.c1 { height: 43px; letter-spacing: -.17px; } .c2 { height: 34px; } .c3 { height: 44px; }
.nan { margin-left: auto; flex: none; width: 439px; height: 34px; padding-right: 4px; text-align: right; font: 700 15px/32px "Liberation Serif", serif; letter-spacing: 1px; }
.expr-label { height: 26px; line-height: 22px; }
.expr { height: 69px; margin-left: 1px; padding: 4px 2px; background: #fff; letter-spacing: -.08px; }
.buttons, .actions { display: flex; padding-right: 1px; }
.buttons { margin-top: 14px; padding-left: 10px; }
.actions { margin-top: 39px; justify-content: flex-end; }
.btn { height: 31px; display: flex; align-items: center; justify-content: center; padding: 1px 2px 0 0; border: 1.5px solid #cdcdcd; border-radius: 5px; background: #fbfbfb; }
.b-load { width: 97px; letter-spacing: .5px; } .b-save { width: 100px; margin-left: 11px; letter-spacing: .5px; } .b-edit { width: 336px; margin-left: auto; letter-spacing: .05px; }
.b-ok { width: 68px; border-color: #3c8fd8; background: #dce9f4; } .b-cancel { width: 94px; margin-left: 9px; } .b-help { width: 77px; margin-left: 9px; }
```
